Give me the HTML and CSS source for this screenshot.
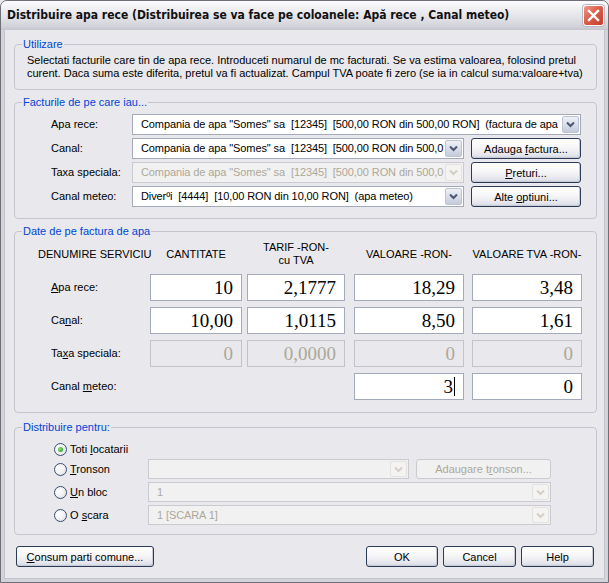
FILE: index.html
```html
<!DOCTYPE html>
<html>
<head>
<meta charset="utf-8">
<title>Distribuire apa rece</title>
<link rel="stylesheet" href="styles.css">
</head>
<body>
<div class="window">
  <div class="titlebar">
    <span class="title">Distribuire apa rece (Distribuirea se va face pe coloanele: Apă rece , Canal meteo)</span>
    <span class="close"><svg width="13" height="13" viewBox="0 0 13 13"><path d="M2 2 L11 11 M11 2 L2 11" stroke="#fff" stroke-width="2.4" stroke-linecap="square"/></svg></span>
  </div>
  <div class="client">
    <fieldset class="group g-util">
      <legend>Utilizare</legend>
      <p class="info">Selectati facturile care tin de apa rece. Introduceti numarul de mc facturati. Se va estima valoarea, folosind pretul<br>curent. Daca suma este diferita, pretul va fi actualizat. Campul TVA poate fi zero (se ia in calcul suma:valoare+tva)</p>
    </fieldset>

    <fieldset class="group g-fact">
      <legend>Facturile de pe care iau...</legend>
      <div class="fact-grid">
        <span class="lbl">Apa rece:</span>
        <div class="combo span2"><span class="combo-text">Compania de apa "Somes" sa&nbsp; [12345]&nbsp; [500,00 RON din 500,00 RON]&nbsp; (factura de apa</span><span class="drop"><svg width="9" height="7" viewBox="0 0 9 7"><polyline points="1,1.5 4.5,5 8,1.5" fill="none" stroke="#4a5672" stroke-width="2"/></svg></span></div>

        <span class="lbl">Canal:</span>
        <div class="combo"><span class="combo-text">Compania de apa "Somes" sa&nbsp; [12345]&nbsp; [500,00 RON din 500,0</span><span class="drop"><svg width="9" height="7" viewBox="0 0 9 7"><polyline points="1,1.5 4.5,5 8,1.5" fill="none" stroke="#4a5672" stroke-width="2"/></svg></span></div>
        <button class="btn">Adauga <u>f</u>actura...</button>

        <span class="lbl">Taxa speciala:</span>
        <div class="combo disabled"><span class="combo-text">Compania de apa "Somes" sa&nbsp; [12345]&nbsp; [500,00 RON din 500,0</span><span class="drop"><svg width="9" height="7" viewBox="0 0 9 7"><polyline points="1,1.5 4.5,5 8,1.5" fill="none" stroke="#d2d0c6" stroke-width="2"/></svg></span></div>
        <button class="btn"><u>P</u>returi...</button>

        <span class="lbl">Canal meteo:</span>
        <div class="combo"><span class="combo-text">Diverºi&nbsp; [4444]&nbsp; [10,00 RON din 10,00 RON]&nbsp; (apa meteo)</span><span class="drop"><svg width="9" height="7" viewBox="0 0 9 7"><polyline points="1,1.5 4.5,5 8,1.5" fill="none" stroke="#4a5672" stroke-width="2"/></svg></span></div>
        <button class="btn">Alte <u>o</u>ptiuni...</button>
      </div>
    </fieldset>

    <fieldset class="group g-date">
      <legend>Date de pe factura de apa</legend>
      <div class="date-grid">
        <span class="hdr hdr-first">DENUMIRE SERVICIU</span>
        <span class="hdr hdr-c w92">CANTITATE</span>
        <span class="hdr hdr-c w98">TARIF -RON-<br>cu TVA</span>
        <span class="hdr hdr-c w110">VALOARE -RON-</span>
        <span class="hdr hdr-c w110">VALOARE TVA -RON-</span>

        <span class="lbl"><u>A</u>pa rece:</span>
        <div class="num w92">10</div>
        <div class="num w98">2,1777</div>
        <div class="num w110">18,29</div>
        <div class="num w110">3,48</div>

        <span class="lbl">Ca<u>n</u>al:</span>
        <div class="num w92">10,00</div>
        <div class="num w98">1,0115</div>
        <div class="num w110">8,50</div>
        <div class="num w110">1,61</div>

        <span class="lbl">Ta<u>x</u>a speciala:</span>
        <div class="num w92 off">0</div>
        <div class="num w98 off">0,0000</div>
        <div class="num w110 off">0</div>
        <div class="num w110 off">0</div>

        <span class="lbl">Canal <u>m</u>eteo:</span>
        <span></span>
        <span></span>
        <div class="num w110">3<span class="caret"></span></div>
        <div class="num w110">0</div>
      </div>
    </fieldset>

    <fieldset class="group g-dist">
      <legend>Distribuire pentru:</legend>
      <div class="dist-grid">
        <label class="radio-row first"><span class="radio checked"></span><span>Toti <u>l</u>ocatarii</span></label>

        <label class="radio-row"><span class="radio"></span><span><u>T</u>ronson</span></label>
        <div class="combo disabled"><span class="combo-text"></span><span class="drop"><svg width="9" height="7" viewBox="0 0 9 7"><polyline points="1,1.5 4.5,5 8,1.5" fill="none" stroke="#d2d0c6" stroke-width="2"/></svg></span></div>
        <button class="btn btn-off">Adaugare t<u>r</u>onson...</button>

        <label class="radio-row"><span class="radio"></span><span><u>U</u>n bloc</span></label>
        <div class="combo disabled span2"><span class="combo-text">1</span><span class="drop"><svg width="9" height="7" viewBox="0 0 9 7"><polyline points="1,1.5 4.5,5 8,1.5" fill="none" stroke="#d2d0c6" stroke-width="2"/></svg></span></div>

        <label class="radio-row"><span class="radio"></span><span>O <u>s</u>cara</span></label>
        <div class="combo disabled span2"><span class="combo-text">1 [SCARA 1]</span><span class="drop"><svg width="9" height="7" viewBox="0 0 9 7"><polyline points="1,1.5 4.5,5 8,1.5" fill="none" stroke="#d2d0c6" stroke-width="2"/></svg></span></div>
      </div>
    </fieldset>

    <div class="bottom">
      <button class="btn btn-consum"><u>C</u>onsum parti comune...</button>
      <div class="bottom-right">
        <button class="btn btn-ok">OK</button>
        <button class="btn btn-std">Cancel</button>
        <button class="btn btn-std">Help</button>
      </div>
    </div>
  </div>
</div>
</body>
</html>
```

FILE: styles.css
```css
* { box-sizing: border-box; }

html, body {
  margin: 0;
  padding: 0;
  background: #e9e8ec;
}

body {
  font-family: "Liberation Sans", Arial, sans-serif;
  font-size: 11px;
  line-height: 13px;
  color: #000;
}

.window {
  width: 609px;
  height: 583px;
  border: 1px solid #6f6f78;
  border-radius: 7px 7px 0 0;
  background: #d3d3da;
  display: flex;
  flex-direction: column;
  overflow: hidden;
}

.titlebar {
  height: 29px;
  flex: none;
  display: flex;
  align-items: center;
  justify-content: space-between;
  padding: 0 4px 0 6px;
  background: linear-gradient(#fdfdfe 0%, #eeeef2 30%, #e1e1e7 60%, #d0d0d8 90%, #c4c4cc 100%);
}

.title {
  font-family: "DejaVu Sans Condensed", "Liberation Sans", sans-serif;
  font-weight: bold;
  font-size: 12px;
  color: #111;
  white-space: nowrap;
}

.close {
  flex: none;
  width: 21px;
  height: 21px;
  border: 1px solid #fff;
  border-radius: 3px;
  background: linear-gradient(135deg, #ef9a8a 0%, #dc5f4c 45%, #c23f2a 100%);
  display: flex;
  align-items: center;
  justify-content: center;
  box-shadow: 0 0 0 1px #b9b9c2;
}

.client {
  flex: 1;
  margin: 0 3px 3px;
  background: #e9e8ec;
  padding: 8px 7px 0 9px;
  border-left: 1px solid #c4c4cc;
  border-right: 1px solid #c4c4cc;
  border-bottom: 1px solid #c4c4cc;
}

.group {
  margin: 0;
  padding: 0;
  border: 1px solid #c6c5cd;
  border-radius: 4px;
  min-inline-size: 0;
}

.group legend {
  color: #0046d5;
  padding: 0 1px;
  margin-left: 7px;
  line-height: 13px;
}

.g-util .info {
  margin: 0;
  padding: 3px 4px 9px 12px;
  white-space: nowrap;
}

.g-fact { margin-top: 6px; }
.g-date { margin-top: 6px; }
.g-dist { margin-top: 8px; }

.fact-grid {
  display: grid;
  grid-template-columns: 110px 332px 110px;
  column-gap: 7px;
  row-gap: 3px;
  grid-auto-rows: 21px;
  padding: 5px 0 11px 0;
  align-items: center;
}

.lbl {
  padding-left: 36px;
  white-space: nowrap;
}

.span2 { grid-column: span 2; }

.combo {
  height: 21px;
  border: 1px solid #a3abba;
  background: #fff;
  display: flex;
  align-items: stretch;
  overflow: hidden;
  padding: 1px;
}

.combo-text {
  flex: 1;
  min-width: 0;
  overflow: hidden;
  white-space: nowrap;
  padding: 2px 0 0 7px;
  letter-spacing: -0.1px;
}

.drop {
  flex: none;
  width: 17px;
  border: 1px solid #bdc4d4;
  border-radius: 2px;
  background: linear-gradient(#eef0f6, #d6dbe7 60%, #c4cadb);
  display: flex;
  align-items: center;
  justify-content: center;
}

.combo.disabled {
  background: #f2f1f1;
  border-color: #cbcad0;
  color: #aca899;
}

.combo.disabled .drop {
  background: #f4f3f2;
  border-color: #e3e2e0;
}

.btn {
  font-family: "Liberation Sans", Arial, sans-serif;
  font-size: 11px;
  height: 21px;
  padding: 0;
  border: 1px solid #2c3b57;
  border-radius: 3px;
  color: #000;
  background: linear-gradient(#ffffff 0%, #f6f6f8 45%, #e7e8ee 80%, #d6d8e2 100%);
  box-shadow: inset -1px -1px 0 #c8cad6;
}

.btn-off {
  border-color: #cbcad0;
  color: #aca899;
  background: #f2f1f1;
  box-shadow: none;
}

.date-grid {
  display: grid;
  grid-template-columns: 135px 97px 107px 118px 110px;
  grid-template-rows: 28px 27px 27px 27px 27px;
  row-gap: 6px;
  padding: 2px 0 12px 0;
  align-items: center;
}

.hdr { white-space: nowrap; }
.hdr-c { text-align: center; }
.hdr-first { padding-left: 23px; }

.w92 { width: 92px; }
.w98 { width: 98px; }
.w110 { width: 110px; }

.num {
  height: 27px;
  border: 1px solid #a3abba;
  background: #fff;
  font-family: "Liberation Serif", "Times New Roman", serif;
  font-size: 19px;
  line-height: 25px;
  padding-right: 8px;
  display: flex;
  justify-content: flex-end;
  align-items: center;
}

.num.off {
  background: #e9e8ec;
  border-color: #c3c2c8;
  color: #aca899;
}

.caret {
  display: inline-block;
  width: 1px;
  height: 19px;
  background: #000;
  margin-left: 1px;
}

.dist-grid {
  display: grid;
  grid-template-columns: 126px 261px 135px;
  column-gap: 7px;
  grid-template-rows: 14px 20px 20px 20px;
  row-gap: 3px;
  padding: 8px 0 9px 0;
  align-items: center;
}

.radio-row {
  grid-column: 1;
  display: flex;
  align-items: center;
  padding-left: 39px;
  white-space: nowrap;
}

.radio-row.first { grid-column: 1 / span 3; }

.radio {
  width: 13px;
  height: 13px;
  border-radius: 50%;
  border: 1px solid #3b4f70;
  background: radial-gradient(circle at 35% 35%, #ffffff 0%, #f2f2f4 50%, #d4d6de 100%);
  margin-right: 3px;
  position: relative;
  flex: none;
}

.radio.checked::after {
  content: "";
  position: absolute;
  left: 3px;
  top: 3px;
  width: 5px;
  height: 5px;
  border-radius: 50%;
  background: radial-gradient(circle at 40% 40%, #9ce08f 0%, #3fae38 60%, #2a8a25 100%);
}

.dist-grid .combo { height: 20px; }
.dist-grid .btn { height: 20px; }

.bottom {
  display: flex;
  justify-content: space-between;
  margin-top: 11px;
  padding-left: 2px;
  padding-right: 3px;
}

.btn-consum { width: 138px; }

.bottom-right {
  display: flex;
  gap: 5px;
}

.btn-ok { width: 72px; }
.btn-std { width: 73px; }
```
